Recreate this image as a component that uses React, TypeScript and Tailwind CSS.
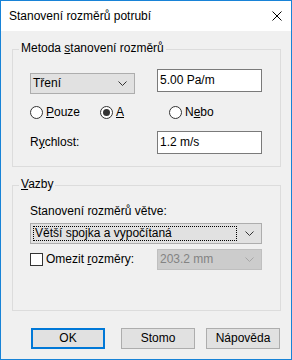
import React from 'react';

function Chevron({ color = '#333' }: { color?: string }) {
  return (
    <svg width="9" height="5" viewBox="0 0 9 5" className="shrink-0">
      <polyline points="0.5,0.5 4.5,4.5 8.5,0.5" fill="none" stroke={color} strokeWidth="1" />
    </svg>
  );
}

function Radio({ checked, children }: { checked?: boolean; children: React.ReactNode }) {
  return (
    <div className="flex items-center gap-[3px]">
      <div className="w-[13px] h-[13px] rounded-full border border-[#333] bg-white flex items-center justify-center">
        {checked && <div className="w-[7px] h-[7px] rounded-full bg-[#333]" />}
      </div>
      <span>{children}</span>
    </div>
  );
}

function Group({ title, className, children }: { title: React.ReactNode; className?: string; children: React.ReactNode }) {
  return (
    <div className={`border border-[#dcdcdc] flex flex-col ${className ?? ''}`}>
      <span className="-mt-[9px] ml-[6px] px-[2px] self-start bg-[#f0f0f0] leading-[15px]">{title}</span>
      {children}
    </div>
  );
}

export default function App() {
  return (
    <div className="w-[292px] h-[360px] border border-[#1883d7] bg-[#f0f0f0] flex flex-col text-[12px] leading-[15px] text-black font-['Liberation_Sans',Arial,sans-serif]">
      <div className="h-[30px] shrink-0 bg-white flex items-center justify-between pl-[8px] pr-[9px]">
        <span>Stanovení rozměrů potrubí</span>
        <svg width="10" height="10" viewBox="0 0 10 10">
          <path d="M0.5 0.5L9.5 9.5M9.5 0.5L0.5 9.5" stroke="#000" strokeWidth="1" fill="none" />
        </svg>
      </div>

      <div className="flex flex-col pl-[11px] pr-[10px]">
        <Group
          className="mt-[18px] pb-[12px]"
          title={
            <>
              Metoda <u>s</u>tanovení rozměrů
            </>
          }
        >
          <div className="flex items-start pl-[17px] mt-[13px]">
            <div className="w-[105px] h-[21px] mt-[4px] border border-[#adadad] bg-[#e1e1e1] flex items-center justify-between pl-[2px] pr-[7px]">
              <span>Tření</span>
              <Chevron />
            </div>
            <div className="w-[105px] h-[23px] ml-[22px] border border-[#7a7a7a] bg-white flex items-center pl-[2px]">
              5.00 Pa/m
            </div>
          </div>

          <div className="flex items-center pl-[17px] mt-[11px] h-[15px]">
            <div className="w-[70px]">
              <Radio>
                <u>P</u>ouze
              </Radio>
            </div>
            <div className="w-[69px]">
              <Radio checked>
                <u>A</u>
              </Radio>
            </div>
            <Radio>
              N<u>e</u>bo
            </Radio>
          </div>

          <div className="flex items-center pl-[17px] mt-[11px]">
            <span className="w-[127px]">
              R<u>y</u>chlost:
            </span>
            <div className="w-[105px] h-[23px] border border-[#7a7a7a] bg-white flex items-center pl-[2px]">
              1.2 m/s
            </div>
          </div>
        </Group>

        <Group
          className="mt-[18px] pb-[40px]"
          title={
            <>
              <u>V</u>azby
            </>
          }
        >
          <span className="pl-[17px] mt-[12px]">Stanovení rozměrů větve:</span>
          <div className="ml-[17px] mt-[4px] w-[232px] h-[21px] border border-[#adadad] bg-[#e1e1e1] flex items-center pr-[7px] pl-[2px]">
            <div className="flex-1 h-[15px] border border-dotted border-black flex items-center pl-[1px] mr-[8px]">
              Větší spojka a vypočítaná
            </div>
            <Chevron />
          </div>
          <div className="flex items-center pl-[17px] mt-[5px]">
            <div className="w-[127px] flex items-center gap-[3px]">
              <div className="w-[13px] h-[13px] border border-[#333] bg-white" />
              <span>
                Omezit <u>r</u>ozměry:
              </span>
            </div>
            <div className="w-[105px] h-[21px] border border-[#bfbfbf] bg-[#cccccc] flex items-center justify-between pl-[2px] pr-[7px] text-[#838383]">
              <span>203.2 mm</span>
              <Chevron color="#a6a6a6" />
            </div>
          </div>
        </Group>
      </div>

      <div className="flex items-center mt-[17px] pl-[30px]">
        <div className="w-[74px] h-[21px] border-2 border-[#0078d7] bg-[#e1e1e1] flex items-center justify-center">OK</div>
        <div className="w-[74px] h-[21px] ml-[16px] border border-[#adadad] bg-[#e1e1e1] flex items-center justify-center">Stomo</div>
        <div className="w-[74px] h-[21px] ml-[11px] border border-[#adadad] bg-[#e1e1e1] flex items-center justify-center">Nápověda</div>
      </div>
    </div>
  );
}
